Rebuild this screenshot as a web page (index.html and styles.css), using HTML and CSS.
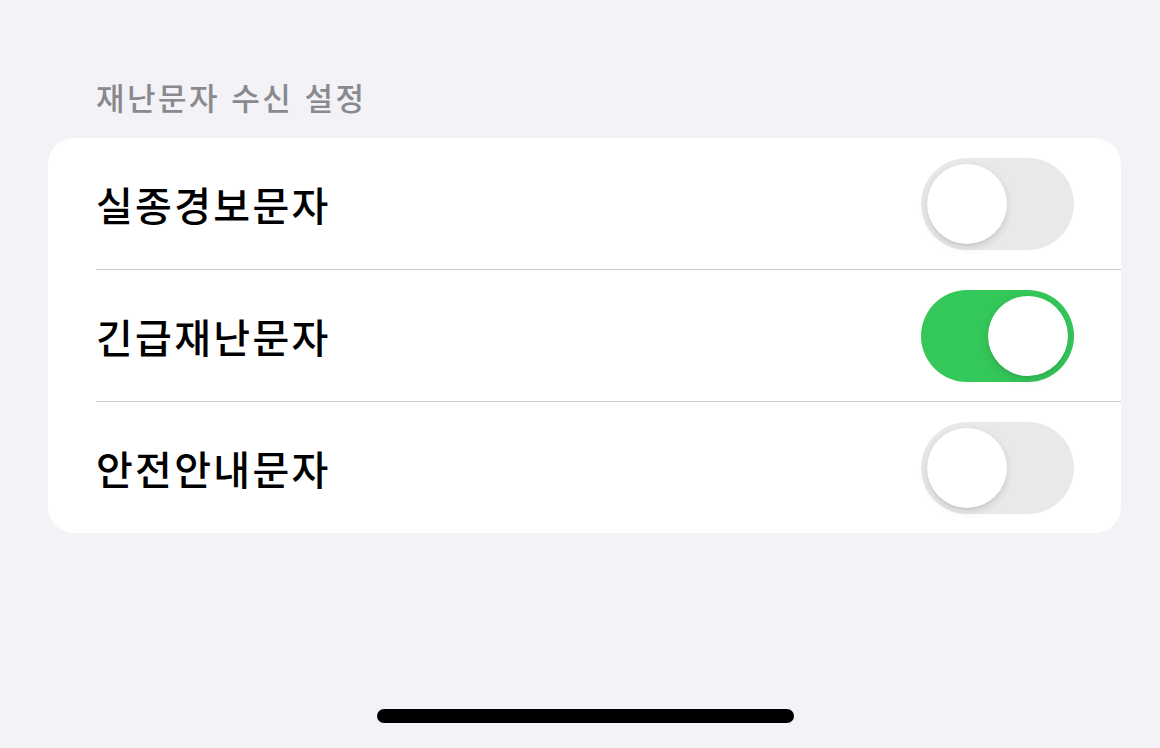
FILE: index.html
```html
<!DOCTYPE html>
<html lang="ko">
<head>
<meta charset="utf-8">
<link rel="stylesheet" href="styles.css">
</head>
<body>
<div class="page">
  <div class="section-title">재난문자 수신 설정</div>
  <div class="card">
    <div class="row">
      <span class="label">실종경보문자</span>
      <span class="toggle"><span class="knob"></span></span>
    </div>
    <div class="row">
      <span class="label">긴급재난문자</span>
      <span class="toggle on"><span class="knob"></span></span>
    </div>
    <div class="row">
      <span class="label">안전안내문자</span>
      <span class="toggle"><span class="knob"></span></span>
    </div>
  </div>
  <div class="spacer"></div>
  <div class="home-bar-wrap"><div class="home-bar"></div></div>
</div>
</body>
</html>
```
FILE: styles.css
```css
* { box-sizing: border-box; }
html, body {
  margin: 0;
  padding: 0;
  background: #f2f2f7;
}
body {
  font-family: "Noto Sans CJK KR", "Noto Sans", sans-serif;
  width: 1160px;
  height: 748px;
  overflow: hidden;
}
.page {
  height: 748px;
  display: flex;
  flex-direction: column;
  padding: 72px 39px 0 48px;
}
.section-title {
  height: 50px;
  line-height: 50px;
  padding-left: 48px;
  font-size: 31px;
  font-weight: 500;
  letter-spacing: 2.5px;
  color: #8a8a8e;
}
.card {
  margin-top: 16px;
  background: #ffffff;
  border-radius: 26px;
  display: flex;
  flex-direction: column;
}
.row {
  height: 132px;
  margin-left: 48px;
  padding-right: 47px;
  display: flex;
  align-items: center;
  justify-content: space-between;
  border-bottom: 1px solid #c8c8ca;
}
.row:last-child { border-bottom: none; height: 131px; }
.label {
  font-size: 40px;
  font-weight: 500;
  color: #000;
  letter-spacing: 2.3px;
}
.toggle {
  width: 153px;
  height: 92px;
  border-radius: 46px;
  background: #e9e9ea;
  padding: 6px;
  display: flex;
  justify-content: flex-start;
}
.toggle.on {
  background: #34c759;
  justify-content: flex-end;
}
.knob {
  width: 80px;
  height: 80px;
  border-radius: 50%;
  background: #ffffff;
  box-shadow: 0 3px 8px rgba(0,0,0,0.13), 0 2px 1px rgba(0,0,0,0.04);
}
.spacer { flex: 1; }
.home-bar-wrap {
  display: flex;
  justify-content: center;
  padding-left: 1px;
  margin-bottom: 25px;
}
.home-bar {
  width: 417px;
  height: 14px;
  border-radius: 7px;
  background: #000;
}
```
